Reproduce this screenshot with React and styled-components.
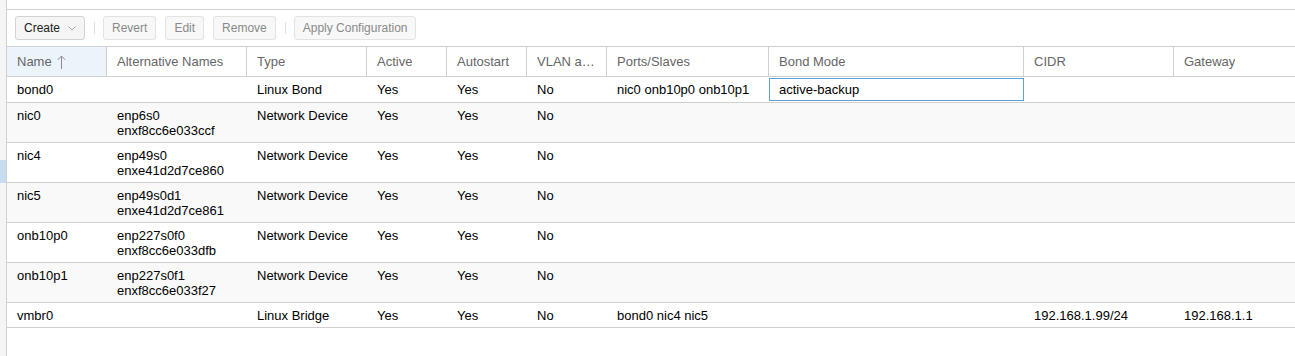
import React from 'react';
import styled, { createGlobalStyle } from 'styled-components';

const GlobalStyle = createGlobalStyle`
  html, body { margin: 0; padding: 0; background: #fff; }
  body {
    font-family: "Liberation Sans", Arial, sans-serif;
    font-size: 13px;
    color: #000;
  }
  * { box-sizing: border-box; }
`;

const COLUMNS = '100px 140px 120px 80px 80px 80px 162px 255px 150px 1fr';

const Page = styled.div`
  display: flex;
  height: 356px;
  overflow: hidden;
  background: #fff;
`;

const SideStrip = styled.div`
  flex: none;
  width: 7px;
  background: #f5f5f5;
  border-right: 1px solid #d0d0d0;
  padding-top: 160px;
`;

const SideMarker = styled.div`
  height: 23px;
  background: #c6ddf1;
`;

const Main = styled.div`
  flex: 1;
  min-width: 0;
  padding-top: 9px;
`;

const Panel = styled.div`
  border-top: 1px solid #d0d0d0;
`;

const Toolbar = styled.div`
  display: flex;
  align-items: center;
  gap: 9px;
  height: 36px;
  padding-left: 8px;
`;

const Button = styled.button`
  display: inline-flex;
  align-items: center;
  gap: 8px;
  height: 24px;
  padding: 0 8px;
  margin: 0;
  font-family: "Liberation Sans", Arial, sans-serif;
  font-size: 12px;
  border-radius: 3px;
  border: 1px solid ${(p) => (p.disabled ? '#e2e2e2' : '#d2d2d2')};
  background: ${(p) => (p.disabled ? '#f8f8f8' : '#f5f5f5')};
  color: ${(p) => (p.disabled ? '#8a8a8a' : '#222')};
  cursor: ${(p) => (p.disabled ? 'default' : 'pointer')};
`;

const Separator = styled.div`
  width: 1px;
  height: 12px;
  margin-right: -1px;
  background: #e0e0e0;
`;

const HeaderRow = styled.div`
  display: grid;
  grid-template-columns: ${COLUMNS};
  border-top: 1px solid #d0d0d0;
  border-bottom: 1px solid #d0d0d0;
`;

const HeaderCell = styled.div`
  display: flex;
  align-items: center;
  gap: 5px;
  min-width: 0;
  padding: 7px 10px 6px;
  line-height: 16px;
  color: #666;
  background: ${(p) => (p.$sorted ? '#ebf3fb' : '#fff')};
  border-right: ${(p) => (p.$last ? 'none' : '1px solid #d0d0d0')};
`;

const HeaderLabel = styled.span`
  min-width: 0;
  overflow: hidden;
  white-space: nowrap;
  text-overflow: ellipsis;
`;

const Row = styled.div`
  display: grid;
  grid-template-columns: ${COLUMNS};
  border-bottom: 1px solid #d0d0d0;
  background: ${(p) => (p.$alt ? '#f9f9f9' : '#fff')};
`;

const Cell = styled.div`
  min-width: 0;
  padding: 5px 10px 4px;
  line-height: 15px;
  white-space: nowrap;
  overflow: hidden;
  text-overflow: ellipsis;
`;

const Line = styled.div`
  white-space: nowrap;
`;

const EditorCell = styled.div`
  padding: 1px 0;
`;

const Editor = styled.input`
  display: block;
  width: 100%;
  height: 23px;
  margin: 0;
  padding: 0 9px;
  border: 1px solid #5b9fdb;
  background: #fff;
  color: #000;
  font-family: "Liberation Sans", Arial, sans-serif;
  font-size: 13px;
  outline: none;
`;

const SortArrow = () => (
  <svg width="9" height="14" viewBox="0 0 9 14" fill="none" stroke="#8a8a8a" strokeWidth="1">
    <path d="M4.5 1.2V14M0.8 4.8L4.5 1.1L8.2 4.8" />
  </svg>
);

const Chevron = () => (
  <svg width="8" height="5" viewBox="0 0 8 5" fill="none" stroke="#a0a0a0" strokeWidth="1">
    <path d="M0.5 0.5L4 4L7.5 0.5" />
  </svg>
);

const headers = [
  { label: 'Name', sorted: true },
  { label: 'Alternative Names' },
  { label: 'Type' },
  { label: 'Active' },
  { label: 'Autostart' },
  { label: 'VLAN aware' },
  { label: 'Ports/Slaves' },
  { label: 'Bond Mode' },
  { label: 'CIDR' },
  { label: 'Gateway', last: true },
];

const rows = [
  { name: 'bond0', alt: [], type: 'Linux Bond', ports: 'nic0 onb10p0 onb10p1', bondMode: 'active-backup', editing: true },
  { name: 'nic0', alt: ['enp6s0', 'enxf8cc6e033ccf'], type: 'Network Device' },
  { name: 'nic4', alt: ['enp49s0', 'enxe41d2d7ce860'], type: 'Network Device' },
  { name: 'nic5', alt: ['enp49s0d1', 'enxe41d2d7ce861'], type: 'Network Device' },
  { name: 'onb10p0', alt: ['enp227s0f0', 'enxf8cc6e033dfb'], type: 'Network Device' },
  { name: 'onb10p1', alt: ['enp227s0f1', 'enxf8cc6e033f27'], type: 'Network Device' },
  { name: 'vmbr0', alt: [], type: 'Linux Bridge', ports: 'bond0 nic4 nic5', cidr: '192.168.1.99/24', gateway: '192.168.1.1' },
];

export default function App() {
  return (
    <>
      <GlobalStyle />
      <Page>
        <SideStrip>
          <SideMarker />
        </SideStrip>
        <Main>
          <Panel>
            <Toolbar>
              <Button>
                Create
                <Chevron />
              </Button>
              <Separator />
              <Button disabled>Revert</Button>
              <Button disabled>Edit</Button>
              <Button disabled>Remove</Button>
              <Separator />
              <Button disabled>Apply Configuration</Button>
            </Toolbar>
            <HeaderRow>
              {headers.map((h) => (
                <HeaderCell key={h.label} $sorted={h.sorted} $last={h.last}>
                  <HeaderLabel>{h.label}</HeaderLabel>
                  {h.sorted && <SortArrow />}
                </HeaderCell>
              ))}
            </HeaderRow>
            {rows.map((r, i) => (
              <Row key={r.name} $alt={i % 2 === 1}>
                <Cell>{r.name}</Cell>
                <Cell>
                  {r.alt.map((a) => (
                    <Line key={a}>{a}</Line>
                  ))}
                </Cell>
                <Cell>{r.type}</Cell>
                <Cell>Yes</Cell>
                <Cell>Yes</Cell>
                <Cell>No</Cell>
                <Cell>{r.ports || ''}</Cell>
                {r.editing ? (
                  <EditorCell>
                    <Editor readOnly value={r.bondMode} />
                  </EditorCell>
                ) : (
                  <Cell>{r.bondMode || ''}</Cell>
                )}
                <Cell>{r.cidr || ''}</Cell>
                <Cell>{r.gateway || ''}</Cell>
              </Row>
            ))}
          </Panel>
        </Main>
      </Page>
    </>
  );
}
